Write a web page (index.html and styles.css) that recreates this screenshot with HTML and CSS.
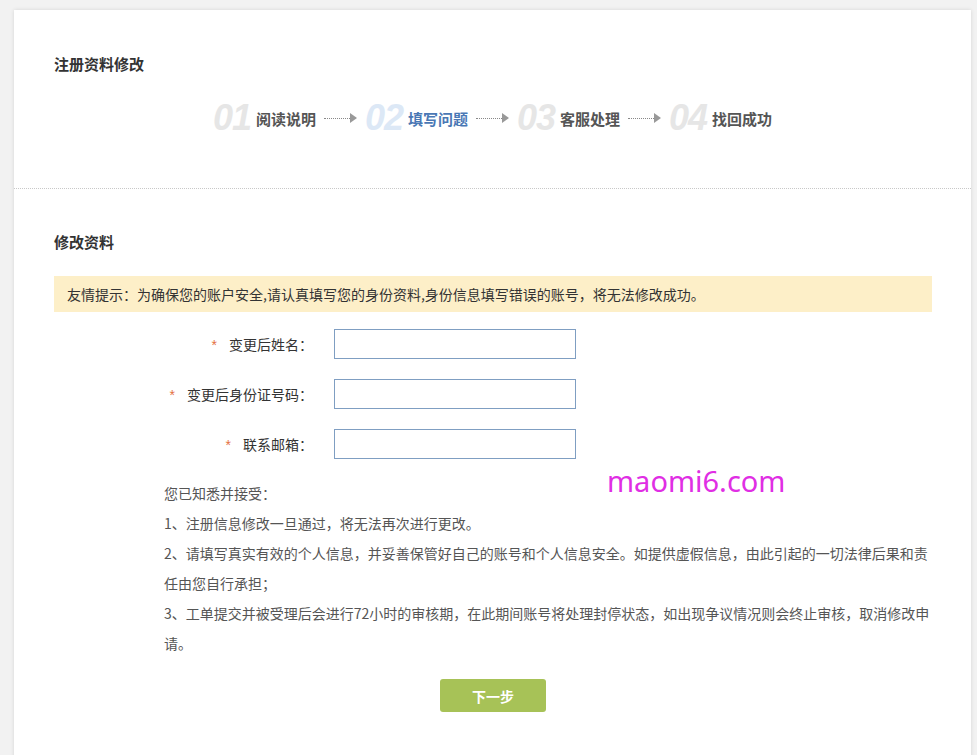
FILE: index.html
```html
<!DOCTYPE html>
<html lang="zh-CN">
<head>
    <meta charset="UTF-8">
    <meta name="viewport" content="width=device-width, initial-scale=1.0">
    <title>注册资料修改</title>
    <link rel="stylesheet" href="styles.css">
</head>
<body>
    <div class="card">
        <div class="card-head">
            <h3 class="title">注册资料修改</h3>
            <div class="steps">
                <span class="step-num">01</span>
                <span class="step-label">阅读说明</span>
                <span class="step-arrow"><i class="dots"></i><i class="tri"></i></span>
                <span class="step-num active">02</span>
                <span class="step-label active">填写问题</span>
                <span class="step-arrow"><i class="dots"></i><i class="tri"></i></span>
                <span class="step-num">03</span>
                <span class="step-label">客服处理</span>
                <span class="step-arrow"><i class="dots"></i><i class="tri"></i></span>
                <span class="step-num">04</span>
                <span class="step-label">找回成功</span>
            </div>
        </div>

        <div class="card-body">
            <h3 class="title">修改资料</h3>
            <div class="notice">友情提示：为确保您的账户安全,请认真填写您的身份资料,身份信息填写错误的账号，将无法修改成功。</div>

            <div class="form">
                <div class="form-row">
                    <label class="form-label"><span class="req">*</span>变更后姓名：</label>
                    <input type="text" class="form-input">
                </div>
                <div class="form-row">
                    <label class="form-label"><span class="req">*</span>变更后身份证号码：</label>
                    <input type="text" class="form-input">
                </div>
                <div class="form-row">
                    <label class="form-label"><span class="req">*</span>联系邮箱：</label>
                    <input type="text" class="form-input">
                </div>
            </div>

            <div class="terms">
                <p>您已知悉并接受：</p>
                <p>1、注册信息修改一旦通过，将无法再次进行更改。</p>
                <p>2、请填写真实有效的个人信息，并妥善保管好自己的账号和个人信息安全。如提供虚假信息，由此引起的一切法律后果和责任由您自行承担；</p>
                <p>3、工单提交并被受理后会进行72小时的审核期，在此期间账号将处理封停状态，如出现争议情况则会终止审核，取消修改申请。</p>
            </div>

            <div class="actions">
                <button class="btn-next">下一步</button>
            </div>
        </div>

        <div class="watermark">maomi6.com</div>
    </div>
</body>
</html>
```

FILE: styles.css
```css
body {
    margin: 0;
    padding-top: 10px;
    background-color: #f2f2f2;
    font-family: "Noto Sans CJK SC", "Noto Sans", sans-serif;
    font-size: 14px;
    color: #333;
}
.card {
    position: relative;
    margin-left: 14px;
    width: 957px;
    min-height: 780px;
    background-color: #fff;
    box-shadow: 0 0 4px rgba(0, 0, 0, 0.12);
}
.title {
    margin: 0;
    font-size: 15px;
    line-height: 20px;
    font-weight: bold;
    color: #333;
}
.card-head {
    padding: 44px 40px 50px;
    border-bottom: 1px dotted #c8c8c8;
}
.steps {
    display: flex;
    align-items: center;
    justify-content: center;
    height: 40px;
    margin-top: 24px;
}
.step-num {
    font-family: "Liberation Sans", Arial, sans-serif;
    font-size: 36px;
    font-style: italic;
    font-weight: bold;
    letter-spacing: -1px;
    color: #e6e6e6;
    margin-right: 5px;
}
.step-num.active {
    color: #dce8f6;
}
.step-label {
    font-size: 15px;
    font-weight: bold;
    color: #555;
}
.step-label.active {
    color: #4a78b5;
}
.step-arrow {
    display: flex;
    align-items: center;
    margin: 0 8px;
}
.step-arrow .dots {
    width: 26px;
    border-top: 1px dotted #888;
}
.step-arrow .tri {
    width: 0;
    height: 0;
    border-top: 5px solid transparent;
    border-bottom: 5px solid transparent;
    border-left: 7px solid #999;
}
.card-body {
    padding: 43px 39px 40px 40px;
}
.notice {
    margin-top: 24px;
    height: 36px;
    line-height: 36px;
    padding-left: 13px;
    background-color: #fdefc8;
    color: #333;
}
.form {
    margin-top: 17px;
}
.form-row {
    display: flex;
    align-items: center;
    height: 30px;
    margin-bottom: 20px;
}
.form-row:last-child {
    margin-bottom: 19px;
}
.form-label {
    width: 259px;
    text-align: right;
    line-height: 30px;
    color: #333;
}
.req {
    color: #e4723f;
    margin-right: 12px;
    font-family: "Liberation Sans", Arial, sans-serif;
}
.form-input {
    margin-left: 21px;
    width: 242px;
    height: 30px;
    box-sizing: border-box;
    border: 1px solid #7f9ec2;
    padding: 0 6px;
    outline: none;
}
.terms {
    margin-left: 110px;
    width: 768px;
    line-height: 30px;
    color: #555;
}
.terms p {
    margin: 0;
}
.actions {
    margin-top: 21px;
    text-align: center;
}
.btn-next {
    width: 106px;
    height: 33px;
    border: none;
    border-radius: 3px;
    background-color: #a7c257;
    color: #fff;
    font-family: "Noto Sans CJK SC", sans-serif;
    font-size: 14px;
    font-weight: bold;
    cursor: pointer;
}
.watermark {
    position: absolute;
    left: 593px;
    top: 451px;
    font-family: "Noto Sans", sans-serif;
    font-size: 29px;
    color: #e02ee4;
}
```
